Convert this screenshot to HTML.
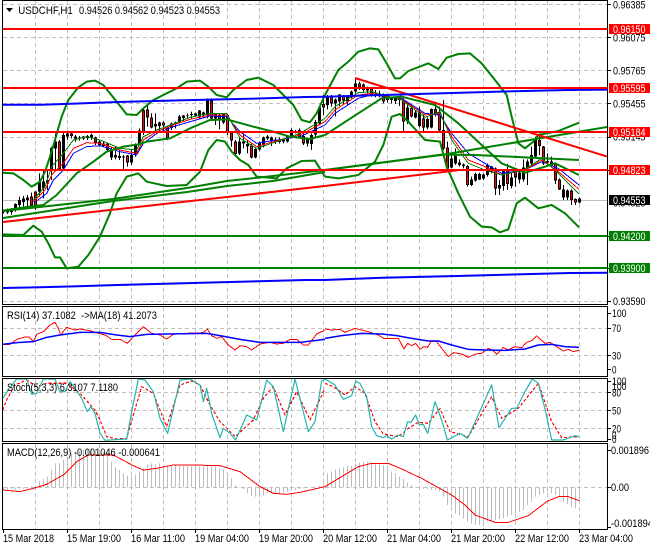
<!DOCTYPE html>
<html><head><meta charset="utf-8"><style>
html,body{margin:0;padding:0;background:#fff;width:650px;height:550px;overflow:hidden}
svg{display:block}
text{font-family:"Liberation Sans",sans-serif;font-size:11px;fill:#000;white-space:pre}
</style></head><body>
<svg width="650" height="550" viewBox="0 0 650 550" xmlns="http://www.w3.org/2000/svg">
<defs>
<clipPath id="cm"><rect x="3" y="1" width="604" height="303"/></clipPath>
<clipPath id="cr"><rect x="3" y="307" width="604" height="69"/></clipPath>
<clipPath id="cs"><rect x="3" y="379" width="604" height="62"/></clipPath>
<clipPath id="cd"><rect x="3" y="444" width="604" height="85"/></clipPath>
</defs>
<rect width="650" height="550" fill="#fff"/>
<!-- grid -->
<g stroke="#c0c0c0" stroke-width="1" stroke-dasharray="4 3" fill="none" shape-rendering="crispEdges">
<path d="M35.5 1V304M67.5 1V304M99.5 1V304M131.5 1V304M163.5 1V304M195.5 1V304M227.5 1V304M259.5 1V304M291.5 1V304M323.5 1V304M355.5 1V304M387.5 1V304M419.5 1V304M451.5 1V304M483.5 1V304M515.5 1V304M547.5 1V304M579.5 1V304"/>
<path d="M35.5 307V376M67.5 307V376M99.5 307V376M131.5 307V376M163.5 307V376M195.5 307V376M227.5 307V376M259.5 307V376M291.5 307V376M323.5 307V376M355.5 307V376M387.5 307V376M419.5 307V376M451.5 307V376M483.5 307V376M515.5 307V376M547.5 307V376M579.5 307V376"/>
<path d="M35.5 379V441M67.5 379V441M99.5 379V441M131.5 379V441M163.5 379V441M195.5 379V441M227.5 379V441M259.5 379V441M291.5 379V441M323.5 379V441M355.5 379V441M387.5 379V441M419.5 379V441M451.5 379V441M483.5 379V441M515.5 379V441M547.5 379V441M579.5 379V441"/>
<path d="M35.5 444V529M67.5 444V529M99.5 444V529M131.5 444V529M163.5 444V529M195.5 444V529M227.5 444V529M259.5 444V529M291.5 444V529M323.5 444V529M355.5 444V529M387.5 444V529M419.5 444V529M451.5 444V529M483.5 444V529M515.5 444V529M547.5 444V529M579.5 444V529"/>
<path d="M3 4.5H607M3 37.5H607M3 70.5H607M3 103.5H607M3 137.5H607M3 170.5H607M3 236.5H607M3 268.5H607M3 301.5H607"/>
<path d="M3 328.5H607M3 355.5H607M3 392.5H607M3 410.5H607M3 428.5H607M3 487.5H607"/>
</g>
<path d="M3 200.5H607" stroke="#c0c0c0" stroke-width="1" shape-rendering="crispEdges"/>
<!-- MACD histogram -->
<g transform="translate(0,305) scale(1,.33333)" stroke="#bcbcbc" stroke-width="1" fill="none" shape-rendering="crispEdges">
<path d="M3.5 547V555M7.5 547V555M11.5 547V552M15.5 547V553M19.5 547V552M23.5 547V552M27.5 547V550M31.5 547V544M35.5 547V542M39.5 547V528M43.5 547V522M47.5 547V515M51.5 547V495M55.5 547V475M59.5 547V475M63.5 547V465M67.5 547V455M71.5 547V445M75.5 547V440M79.5 547V438M83.5 547V435M87.5 547V432M91.5 547V430M95.5 547V432M99.5 547V435M103.5 547V440M107.5 547V445M111.5 547V470M115.5 547V487M119.5 547V495M123.5 547V505M127.5 547V512M131.5 547V515M135.5 547V508M139.5 547V500M143.5 547V490M147.5 547V478M151.5 547V475M155.5 547V478M159.5 547V475M163.5 547V485M167.5 547V483M171.5 547V480M175.5 547V482M179.5 547V483M183.5 547V483M187.5 547V483M191.5 547V484M195.5 547V484M199.5 547V484M203.5 547V484M207.5 547V484M211.5 547V484M215.5 547V485M219.5 547V490M223.5 547V495M227.5 547V505M231.5 547V520M235.5 547V540M239.5 547V548M243.5 547V552M247.5 547V565M251.5 547V573M255.5 547V575M259.5 547V575M263.5 547V572M267.5 547V565M271.5 547V563M275.5 547V565M279.5 547V565M283.5 547V563M287.5 547V560M291.5 547V557M295.5 547V555M299.5 547V552M303.5 547V550M307.5 547V548M311.5 547V547M315.5 547V545M319.5 547V542M323.5 547V535"/>
<path d="M327.5 547V505M331.5 547V500M335.5 547V493M339.5 547V490M343.5 547V487M347.5 547V483M351.5 547V483M355.5 547V475M359.5 547V473M363.5 547V470M367.5 547V470M371.5 547V475M375.5 547V478M379.5 547V478M383.5 547V480M387.5 547V490M391.5 547V500M395.5 547V505M399.5 547V515M403.5 547V522M407.5 547V533M411.5 547V540M415.5 547V545M423.5 547V552M427.5 547V552M431.5 547V555M435.5 547V555M439.5 547V560M443.5 547V575M447.5 547V600M451.5 547V605M455.5 547V625M459.5 547V630M463.5 547V640M467.5 547V650M471.5 547V655M475.5 547V660M479.5 547V660M483.5 547V665M487.5 547V650M491.5 547V650M495.5 547V645M499.5 547V642M503.5 547V640M507.5 547V635M511.5 547V630M515.5 547V625M519.5 547V620M523.5 547V615M527.5 547V600M531.5 547V590M535.5 547V575M539.5 547V570M543.5 547V565M547.5 547V560M551.5 547V565M555.5 547V570M559.5 547V575M563.5 547V590M567.5 547V598M571.5 547V605M575.5 547V610M579.5 547V590"/>
</g>
<!-- candles -->
<g transform="scale(1,.33333)" fill="none" shape-rendering="crispEdges">
<path stroke="#000" stroke-width="1" d="M3.5 628V640M7.5 626V642M11.5 624V644M15.5 610V635M19.5 590V625M23.5 588V620M27.5 585V620M31.5 578V622M35.5 575V630M39.5 520V590M43.5 510V595M47.5 510V570M51.5 440V540M55.5 400V510M59.5 420V510M63.5 395V510M67.5 395V420M71.5 396V415M75.5 405V425M79.5 408V422M83.5 408V420M87.5 405V420M91.5 400V420M95.5 410V435M99.5 420V440M103.5 425V442M107.5 428V455M111.5 440V480M115.5 440V478M119.5 450V480M123.5 465V508M127.5 465V500M131.5 450V495M135.5 430V470M139.5 385V435M143.5 325V405M147.5 310V380M151.5 340V385M155.5 340V395M159.5 365V392M163.5 365V395M167.5 380V420M171.5 368V390M175.5 365V385M179.5 345V370M183.5 345V365M187.5 340V355M191.5 335V355M195.5 338V350M199.5 330V355M203.5 335V355M207.5 295V355M211.5 295V360M215.5 340V375M219.5 340V388M223.5 340V372M227.5 342V405M231.5 395V440M235.5 420V468M239.5 410V465M243.5 400V445M247.5 420V460M251.5 430V475M255.5 445V475M259.5 425V452M263.5 410V442M267.5 405V420M271.5 410V438M275.5 412V432M279.5 412V430M283.5 415V430M287.5 405V428M291.5 385V415M295.5 390V400M299.5 385V415M303.5 395V435M307.5 415V440M311.5 400V450M315.5 360V410M319.5 320V375M323.5 285V345"/>
<path stroke="#000" stroke-width="1" d="M327.5 285V328M331.5 285V320M335.5 295V350M339.5 282V318M343.5 285V312M347.5 285V315M351.5 272V295M355.5 235V280M359.5 245V270M363.5 250V275M367.5 260V280M371.5 262V290M375.5 270V292M379.5 272V292M383.5 280V310M387.5 285V308M391.5 290V310M395.5 290V312M399.5 292V318M403.5 295V395M407.5 315V372M411.5 318V352M415.5 332V355M419.5 320V382M423.5 345V395M427.5 352V388M431.5 325V385M435.5 305V350M439.5 320V395M443.5 300V450M447.5 425V515M451.5 465V505M455.5 445V495M459.5 478V500M463.5 490V505M467.5 495V560M471.5 530V558M475.5 518V545M479.5 518V540M483.5 520V540M487.5 490V530M491.5 498V520M495.5 502V585M499.5 540V585M503.5 508V572M507.5 492V570M511.5 515V565M515.5 510V560M519.5 510V550M523.5 478V545M527.5 478V555M531.5 440V498M535.5 410V475M539.5 400V465M543.5 438V495M547.5 460V495M551.5 470V500M555.5 490V552M559.5 535V570M563.5 555V600M567.5 568V600M571.5 568V615M575.5 595V615M579.5 592V610"/>
<path stroke="#000" stroke-width="3" d="M3.5 628V636M7.5 628V638M11.5 628V636M15.5 612V630M19.5 600V615M23.5 596V606M27.5 592V600M31.5 590V616M35.5 575V620M39.5 548V575M43.5 545V565M47.5 540V550M51.5 444V510M55.5 425V445M59.5 425V508M63.5 405V505M67.5 400V410M71.5 400V408M75.5 410V416M79.5 412V416M83.5 410V415M87.5 408V414M91.5 405V412M95.5 412V428M99.5 425V435M103.5 430V438M107.5 430V450M111.5 452V472M115.5 465V472M119.5 468V474M123.5 470V472M127.5 467V488M131.5 465V488M135.5 432V462M139.5 392V432M143.5 330V398M147.5 328V352M151.5 352V382M155.5 372V380M159.5 367V378M163.5 367V376M167.5 382V415M171.5 370V384M175.5 367V372M179.5 350V366M183.5 346V354M187.5 345V347M191.5 342V345M195.5 340V346M199.5 332V350M203.5 337V345M207.5 302V345M211.5 302V355M215.5 342V355M219.5 345V360M223.5 342V368M227.5 345V398M231.5 397V422M235.5 424V462M239.5 424V460M243.5 425V430M247.5 432V440M251.5 436V472M255.5 447V472M259.5 427V448M263.5 413V436M267.5 410V416M271.5 412V422M275.5 418V426M279.5 418V426M283.5 418V425M287.5 407V424M291.5 390V408M295.5 393V396M299.5 390V410M303.5 408V430M307.5 418V430M311.5 405V432M315.5 366V404M319.5 322V370M323.5 312V322"/>
<path stroke="#000" stroke-width="3" d="M327.5 288V315M331.5 290V310M335.5 298V310M339.5 284V305M343.5 287V302M347.5 287V305M351.5 274V292M355.5 250V275M359.5 250V262M363.5 254V270M367.5 262V272M371.5 265V285M375.5 280V285M379.5 280V285M383.5 282V305M387.5 290V300M391.5 292V300M395.5 295V303M399.5 296V300M403.5 300V365M407.5 322V365M411.5 324V350M415.5 338V352M419.5 335V378M423.5 355V382M427.5 357V382M431.5 327V382M435.5 327V340M439.5 338V392M443.5 390V445M447.5 442V505M451.5 475V502M455.5 468V490M459.5 488V495M463.5 493V498M467.5 498V555M471.5 538V555M475.5 522V542M479.5 522V538M483.5 523V535M487.5 495V525M491.5 500V515M495.5 505V565M499.5 555V565M503.5 512V558M507.5 510V552M511.5 533V558M515.5 515V532M519.5 518V538M523.5 502V538M527.5 485V505M531.5 465V490M535.5 415V470M539.5 420V438M543.5 440V490M547.5 483V488M551.5 484V497M555.5 490V542M559.5 538V568M563.5 568V592M567.5 572V592M571.5 572V600M575.5 597V608M579.5 596V607"/>
<path stroke="#ff0000" stroke-width="1" d="M31.5 593V613M35.5 578V617M59.5 428V505M71.5 402V406M95.5 415V425M107.5 433V447M127.5 470V485M143.5 333V395M147.5 331V349M151.5 355V379M163.5 369V374M167.5 385V412M219.5 348V357M211.5 305V352M227.5 348V395M231.5 400V419M235.5 427V459M251.5 439V469M299.5 393V407M303.5 411V427M323.5 314V320"/>
<path stroke="#ff0000" stroke-width="1" d="M331.5 293V307M343.5 290V299M359.5 253V259M363.5 257V267M371.5 268V282M383.5 285V302M403.5 303V362M411.5 327V347M423.5 358V379M435.5 330V337M439.5 341V389M443.5 393V442M447.5 445V502M467.5 501V552M495.5 508V562M507.5 513V549M515.5 518V529M539.5 423V435M543.5 443V487M551.5 487V494M555.5 493V539M559.5 541V565M571.5 575V597M575.5 600V605"/>
</g>
<!-- main overlays -->
<g clip-path="url(#cm)" fill="none" stroke-linejoin="round">
<g transform="scale(.33333)" stroke-width="3" shape-rendering="crispEdges">
<polyline stroke="#0000ff" points="100,610 140,580 160,540 190,510 220,460 260,440 300,437 360,455 410,465 430,430 470,400 520,380 570,365 630,348 680,350 720,395 770,430 830,420 900,410 975,375"/>
<polyline stroke="#ff0000" points="100,605 135,570 155,525 190,490 220,445 260,428 300,430 360,450 410,460 430,420 470,395 520,375 570,358 630,345 680,345 720,405 770,440 830,422 900,405 975,365"/>
<polyline stroke="#008000" points="100,600 135,560 155,500 190,460 220,420 260,410 300,420 360,445 410,450 430,410 470,390 520,372 570,352 630,340 680,340 720,415 770,445 830,425 900,400 975,355"/>
</g>
<g transform="translate(325,0) scale(.33333)" stroke-width="3" shape-rendering="crispEdges">
<polyline stroke="#0000ff" points="0,375 30,340 100,295 140,285 230,295 300,340 345,345 380,400 430,460 480,490 530,520 600,510 650,485 700,505 762,555"/>
<polyline stroke="#ff0000" points="0,365 30,330 100,285 140,280 230,298 300,345 345,340 380,410 430,480 480,500 530,525 600,510 650,480 700,515 762,568"/>
<polyline stroke="#008000" points="0,355 30,320 100,278 140,275 230,300 300,352 345,335 380,420 430,490 480,510 530,525 600,508 650,475 700,520 762,582"/>
</g>
<g transform="scale(.33333)" stroke="#008000" stroke-width="6">
<polyline points="8,518 40,520 70,540 95,560 120,545 135,515 150,470 165,420 185,350 205,300 235,262 260,245 285,242 310,255 330,280 350,305 380,343 410,345 430,325 460,300 490,285 530,265 560,245 600,242 625,260 650,285 680,292 700,270 740,240 775,233 820,255 850,285 880,315 905,360 930,367 950,340 975,285"/>
<polyline points="8,703 70,705 100,677 125,695 145,730 165,772 180,772 200,805 235,800 265,765 300,710 330,640 350,580 380,530 415,520 440,545 500,558 560,555 600,515 625,450 650,420 675,425 695,455 720,480 745,495 770,530 830,535 860,505 905,483 945,482 975,530"/>
<polyline points="8,632 100,618 130,615 170,585 230,520 280,485 320,455 370,440 415,433 440,425 510,415 570,385 630,360 680,358 760,380 820,395 870,410 930,417 975,405"/>
</g>
<g transform="translate(325,0) scale(.33333)" stroke="#008000" stroke-width="6">
<polyline points="0,285 40,210 70,185 100,155 135,145 160,148 185,190 210,235 225,235 250,213 310,190 340,207 365,173 400,162 435,160 470,190 510,240 545,285 560,350 580,430 600,445 625,425 640,405 700,393 762,368"/>
<polyline points="0,530 40,535 100,525 150,485 175,435 200,350 225,342 250,365 300,420 345,425 365,500 400,580 435,650 470,680 500,682 525,697 550,688 575,610 600,593 640,625 680,615 720,640 762,682"/>
<polyline points="0,405 100,340 170,295 230,290 330,315 400,370 470,435 530,490 600,518 660,500 690,490 762,525"/>
<polyline points="0,510 175,487 350,464 450,465 600,472 762,480"/>
</g>
<polyline stroke="#008000" stroke-width="2" points="3,211 113,199 187,188 227,181 273,176 325,170 441,155 607,127"/>
<polyline stroke="#008000" stroke-width="2" points="3,218 113,201 187,192 227,186 273,181 325,172"/>
<path stroke="#ff0000" stroke-width="2" d="M3 222L325 186L460 170"/>
<path stroke="#ff0000" stroke-width="2" d="M355 78L607 156.5"/>
<polyline stroke="#0000ff" stroke-width="2" points="3,104.7 42,104.7 78,103.5 117,102 193,100 267,98.3 305,97 325,96.7 418,94 495,91.7 568,90 607,89.6"/>
<polyline stroke="#0000ff" stroke-width="2" points="3,288 40,287.3 78,286.3 117,285 155,284 193,283 230,282 268,281 305,280 325,280 382,277.7 457,276 495,275 532,274 570,273 607,272.7"/>
<path stroke="#ff0000" stroke-width="2" d="M3 29H607M3 88H607M3 132H607M3 170H607"/>
<path stroke="#008000" stroke-width="2" d="M3 236H607M3 268H607"/>
</g>
<!-- sub panels: RSI -->
<g clip-path="url(#cr)" fill="none" stroke-linejoin="round">
<g transform="translate(0,305) scale(.33333)" stroke-width="3">
<polyline stroke="#ff0000" shape-rendering="crispEdges" points="8,118 30,118 50,103 75,96 88,96 100,110 110,88 130,80 150,60 165,52 175,70 182,90 200,67 225,75 240,72 270,77 295,85 315,90 335,103 360,103 382,115 405,90 430,65 455,85 480,90 500,102 520,88 560,85 610,83 622,72 635,92 650,100 665,95 685,120 705,135 720,122 740,125 755,135 780,117 810,112 830,117 850,115 870,103 890,103 910,120 925,120 950,87 975,75"/>
<polyline stroke="#0000ff" stroke-width="4.5" points="8,118 50,113 100,110 140,97 180,90 240,82 300,82 350,90 390,95 440,88 500,87 620,85 660,92 720,103 780,112 900,112 975,103"/>
</g>
<g transform="translate(325,305) scale(.33333)" stroke-width="3">
<polyline stroke="#ff0000" shape-rendering="crispEdges" points="0,72 20,75 45,73 60,82 90,70 110,75 130,80 160,90 175,100 220,100 237,132 248,115 260,122 272,115 285,132 297,125 308,127 318,110 335,110 350,130 370,155 385,143 410,147 430,157 450,147 470,145 490,130 505,137 515,148 535,127 550,135 570,125 590,128 605,112 620,107 635,93 660,115 675,112 695,125 715,138 730,133 745,140 762,136"/>
<polyline stroke="#0000ff" stroke-width="4.5" points="0,100 50,92 110,85 170,87 215,92 260,100 310,108 340,108 380,120 430,133 480,135 540,136 600,132 640,120 680,118 720,125 762,127"/>
</g>
</g>
<!-- Stoch -->
<g clip-path="url(#cs)" fill="none" stroke-linejoin="round">
<g transform="translate(0,305) scale(.33333)" stroke-width="3.5">
<polyline stroke="#ff0000" stroke-dasharray="9 6" shape-rendering="crispEdges" points="8,315 20,285 45,240 80,225 110,245 140,235 170,235 200,235 240,265 285,315 300,345 320,395 350,402 380,400 400,330 425,245 460,265 500,365 540,240 575,228 600,240 630,300 660,350 705,395 760,345 790,280 820,245 855,330 890,260 930,345 975,250"/>
<polyline stroke="#20b2aa" points="8,280 25,255 50,222 80,222 95,268 110,265 130,222 165,222 180,260 195,260 210,230 225,250 245,280 262,320 272,305 285,325 300,385 315,406 380,402 395,320 415,222 435,225 460,260 480,340 503,385 540,225 570,222 600,240 610,290 620,250 635,325 660,398 670,370 690,385 707,405 740,330 770,345 800,225 820,245 850,380 885,222 925,380 945,350 965,228 975,222"/>
</g>
<g transform="translate(325,305) scale(.33333)" stroke-width="3.5">
<polyline stroke="#ff0000" stroke-dasharray="9 6" shape-rendering="crispEdges" points="0,235 25,245 60,270 90,245 120,265 150,350 175,387 220,395 250,370 280,352 310,355 345,310 375,380 430,395 500,275 530,340 580,310 640,235 680,350 710,398 762,395"/>
<polyline stroke="#20b2aa" points="0,222 30,240 55,283 80,272 92,228 105,235 125,275 140,365 155,392 175,398 185,392 200,402 220,390 235,395 248,350 258,352 272,330 283,360 295,358 308,385 330,290 350,345 367,405 405,385 428,400 500,240 522,368 560,310 575,310 600,260 622,222 640,235 662,320 680,405 715,405 750,392 762,395"/>
</g>
</g>
<!-- MACD signal -->
<g clip-path="url(#cd)" fill="none" stroke="#ff0000" stroke-linejoin="round" shape-rendering="crispEdges">
<polyline transform="translate(0,305) scale(.33333)" stroke-width="3" points="8,555 60,560 100,550 140,538 190,510 230,470 265,450 340,450 400,482 430,495 470,490 520,480 580,480 660,482 720,500 780,545 820,565 860,568 900,562 975,545"/>
<polyline transform="translate(325,305) scale(.33333)" stroke-width="3" points="0,545 50,515 100,485 140,475 190,475 230,492 290,520 340,548 380,570 420,600 450,630 510,652 550,652 610,632 665,590 700,575 730,575 762,587"/>
</g>
<!-- frames -->
<g fill="none" stroke="#000" stroke-width="1" shape-rendering="crispEdges">
<rect x="2.5" y="0.5" width="605" height="304"/>
<rect x="2.5" y="306.5" width="605" height="70"/>
<rect x="2.5" y="378.5" width="605" height="63"/>
<rect x="2.5" y="443.5" width="605" height="86"/>
<path d="M608 4.5h3M608 37.5h3M608 70.5h3M608 103.5h3M608 137.5h3M608 170.5h3M608 236.5h3M608 268.5h3M608 301.5h3M608 313.5h3M608 328.5h3M608 355.5h3M608 369.5h3M608 381.5h3M608 392.5h3M608 410.5h3M608 428.5h3M608 439.5h3M608 450.5h3M608 487.5h3M608 527.5h3"/>
<path d="M3.5 530v3M67.5 530v3M131.5 530v3M195.5 530v3M259.5 530v3M323.5 530v3M387.5 530v3M451.5 530v3M515.5 530v3M579.5 530v3"/>
</g>
<!-- top label -->
<path d="M6 8h7l-3.5 4z" fill="#000"/>
<text x="18.3" y="14" textLength="54.5" lengthAdjust="spacingAndGlyphs">USDCHF,H1</text>
<text x="79" y="14" textLength="141" lengthAdjust="spacingAndGlyphs">0.94526 0.94562 0.94523 0.94553</text>
<text x="7" y="319" textLength="150" lengthAdjust="spacingAndGlyphs">RSI(14) 37.1082  -&gt;MA(18) 41.2073</text>
<text x="7" y="391" textLength="111" lengthAdjust="spacingAndGlyphs">Stoch(5,3,3) 6.3107 7.1180</text>
<text x="7" y="456" textLength="153" lengthAdjust="spacingAndGlyphs">MACD(12,26,9) -0.001046 -0.000641</text>
<!-- right axis -->
<g>
<text x="613" y="8.5" textLength="32.5" lengthAdjust="spacingAndGlyphs">0.96385</text>
<text x="613" y="41.5" textLength="32.5" lengthAdjust="spacingAndGlyphs">0.96075</text>
<text x="613" y="74.5" textLength="32.5" lengthAdjust="spacingAndGlyphs">0.95765</text>
<text x="613" y="107.5" textLength="32.5" lengthAdjust="spacingAndGlyphs">0.95455</text>
<text x="613" y="140.5" textLength="32.5" lengthAdjust="spacingAndGlyphs">0.95145</text>
<text x="613" y="173.5" textLength="32.5" lengthAdjust="spacingAndGlyphs">0.94835</text>
<text x="613" y="206.5" textLength="32.5" lengthAdjust="spacingAndGlyphs">0.94525</text>
<text x="613" y="239.5" textLength="32.5" lengthAdjust="spacingAndGlyphs">0.94215</text>
<text x="613" y="272.5" textLength="32.5" lengthAdjust="spacingAndGlyphs">0.93905</text>
<text x="613" y="305" textLength="32.5" lengthAdjust="spacingAndGlyphs">0.93590</text>
</g>
<g shape-rendering="crispEdges">
<rect x="609" y="24" width="41" height="10" fill="#ff0000"/>
<rect x="609" y="83" width="41" height="10" fill="#ff0000"/>
<rect x="609" y="127" width="41" height="10" fill="#ff0000"/>
<rect x="609" y="165" width="41" height="10" fill="#ff0000"/>
<rect x="609" y="195" width="41" height="10" fill="#000"/>
<rect x="609" y="231" width="41" height="10" fill="#008000"/>
<rect x="609" y="263" width="41" height="10" fill="#008000"/>
</g>
<g>
<text x="613" y="33" textLength="32.5" lengthAdjust="spacingAndGlyphs" style="fill:#fff">0.96150</text>
<text x="613" y="92" textLength="32.5" lengthAdjust="spacingAndGlyphs" style="fill:#fff">0.95595</text>
<text x="613" y="136" textLength="32.5" lengthAdjust="spacingAndGlyphs" style="fill:#fff">0.95184</text>
<text x="613" y="174" textLength="32.5" lengthAdjust="spacingAndGlyphs" style="fill:#fff">0.94823</text>
<text x="613" y="204" textLength="32.5" lengthAdjust="spacingAndGlyphs" style="fill:#fff">0.94553</text>
<text x="613" y="240" textLength="32.5" lengthAdjust="spacingAndGlyphs" style="fill:#fff">0.94200</text>
<text x="613" y="272" textLength="32.5" lengthAdjust="spacingAndGlyphs" style="fill:#fff">0.93900</text>
</g>
<text x="612" y="317" textLength="14.5" lengthAdjust="spacingAndGlyphs">100</text>
<text x="612" y="332" textLength="9" lengthAdjust="spacingAndGlyphs">70</text>
<text x="612" y="359.5" textLength="9" lengthAdjust="spacingAndGlyphs">30</text>
<text x="612" y="373.5" textLength="4.5" lengthAdjust="spacingAndGlyphs">0</text>
<text x="612" y="385" textLength="14.5" lengthAdjust="spacingAndGlyphs">100</text>
<text x="612" y="390" textLength="14.5" lengthAdjust="spacingAndGlyphs">100</text>
<text x="612" y="396.5" textLength="9" lengthAdjust="spacingAndGlyphs">80</text>
<text x="612" y="414.5" textLength="9" lengthAdjust="spacingAndGlyphs">50</text>
<text x="612" y="432.5" textLength="9" lengthAdjust="spacingAndGlyphs">20</text>
<text x="612" y="439" textLength="4.5" lengthAdjust="spacingAndGlyphs">0</text>
<text x="612" y="443" textLength="4.5" lengthAdjust="spacingAndGlyphs">0</text>
<text x="611" y="454" textLength="38" lengthAdjust="spacingAndGlyphs">0.001896</text>
<text x="611" y="491" textLength="18" lengthAdjust="spacingAndGlyphs">0.00</text>
<text x="611" y="527" textLength="42" lengthAdjust="spacingAndGlyphs">-0.001894</text>
<!-- dates -->
<text x="3" y="542" textLength="51" lengthAdjust="spacingAndGlyphs">15 Mar 2018</text>
<text x="67" y="542" textLength="54" lengthAdjust="spacingAndGlyphs">15 Mar 19:00</text>
<text x="131" y="542" textLength="54" lengthAdjust="spacingAndGlyphs">16 Mar 11:00</text>
<text x="195" y="542" textLength="54" lengthAdjust="spacingAndGlyphs">19 Mar 04:00</text>
<text x="259" y="542" textLength="54" lengthAdjust="spacingAndGlyphs">19 Mar 20:00</text>
<text x="323" y="542" textLength="54" lengthAdjust="spacingAndGlyphs">20 Mar 12:00</text>
<text x="387" y="542" textLength="54" lengthAdjust="spacingAndGlyphs">21 Mar 04:00</text>
<text x="451" y="542" textLength="54" lengthAdjust="spacingAndGlyphs">21 Mar 20:00</text>
<text x="515" y="542" textLength="54" lengthAdjust="spacingAndGlyphs">22 Mar 12:00</text>
<text x="579" y="542" textLength="54" lengthAdjust="spacingAndGlyphs">23 Mar 04:00</text>
</svg>
</body></html>
